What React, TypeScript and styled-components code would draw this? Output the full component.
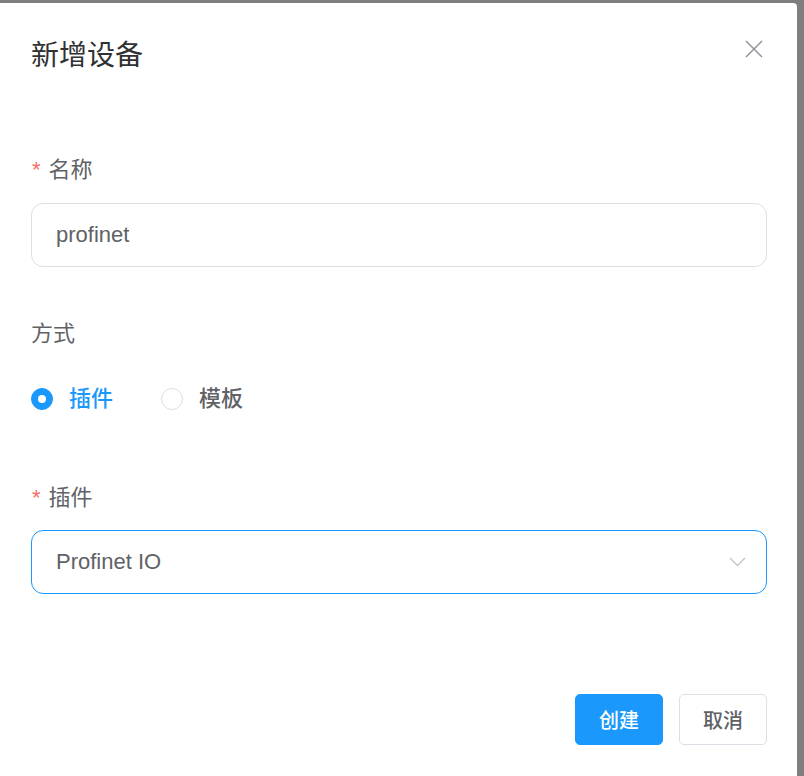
import { useState } from "react";
import styled, { createGlobalStyle, css } from "styled-components";

const primary = "#1a98fc";
const textRegular = "#606266";
const borderBase = "#dcdfe6";

const GlobalStyle = createGlobalStyle`
    html, body {
        margin: 0;
        padding: 0;
        background: #7f7f7f;
        font-family: "Liberation Sans", "Noto Sans CJK SC", sans-serif;
    }
    * {
        box-sizing: border-box;
    }
`;

const Page = styled.div`
    height: 776px;
    overflow: hidden;

    padding-top: 3px;
`;

const Dialog = styled.div`
    width: 797px;
    min-height: 800px;

    padding: 35px 30px 0 31px;

    background: white;
    border-radius: 0 4px 0 0;
`;

const Header = styled.div`
    display: flex;
    justify-content: space-between;
    align-items: center;

    margin-bottom: 81px;
`;

const Title = styled.h2`
    margin: 0;

    font-size: 28px;
    line-height: 36px;
    font-weight: 400;
    color: #303133;
`;

const CloseButton = styled.button`
    display: flex;

    width: 18px;
    height: 18px;
    margin: -14px 4px 0 0;
    padding: 0;

    border: none;
    background: none;
    cursor: pointer;
`;

const FormItem = styled.div`
    margin-bottom: 52px;
`;

const Label = styled.label<{ $required?: boolean }>`
    display: block;

    margin-bottom: 18px;

    font-size: 22px;
    line-height: 30px;
    color: ${textRegular};

    ${(props) =>
        props.$required &&
        css`
            &::before {
                content: "*";
                margin-right: 8px;
                margin-left: 1px;
                color: #f56c6c;
            }
        `}
`;

const Input = styled.input`
    display: block;

    width: 100%;
    height: 64px;
    padding: 0 24px;

    font-family: inherit;
    font-size: 22px;
    color: ${textRegular};

    border: 1px solid ${borderBase};
    border-radius: 12px;
    outline: none;
`;

const RadioGroup = styled.div`
    display: flex;
    align-items: center;

    height: 64px;
`;

const RadioItem = styled.label<{ $checked: boolean }>`
    display: flex;
    align-items: center;
    gap: 16px;

    margin-right: 48px;

    font-size: 22px;
    line-height: 30px;
    font-weight: 500;
    color: ${(props) => (props.$checked ? primary : textRegular)};
    cursor: pointer;
`;

const RadioDot = styled.span<{ $checked: boolean }>`
    position: relative;

    width: 22px;
    height: 22px;

    border-radius: 50%;
    border: 1px solid ${(props) => (props.$checked ? primary : borderBase)};
    background: ${(props) => (props.$checked ? primary : "white")};

    ${(props) =>
        props.$checked &&
        css`
            &::after {
                content: "";
                position: absolute;
                top: 50%;
                left: 50%;
                width: 8px;
                height: 8px;
                border-radius: 50%;
                background: white;
                transform: translate(-50%, -50%);
            }
        `}
`;

const Select = styled.div`
    display: flex;
    justify-content: space-between;
    align-items: center;

    height: 64px;
    margin-top: -1px;
    padding: 0 20px 0 24px;

    font-size: 22px;
    color: ${textRegular};

    border: 1px solid ${primary};
    border-radius: 12px;
`;

const Footer = styled.div`
    display: flex;
    justify-content: flex-end;
    gap: 16px;

    padding-top: 48px;
`;

const Button = styled.button<{ $primary?: boolean }>`
    height: 51px;
    padding: 0 23px;

    font-family: inherit;
    font-size: 20px;
    font-weight: 500;

    border-radius: 5px;
    cursor: pointer;

    ${(props) =>
        props.$primary
            ? css`
                  color: white;
                  background: ${primary};
                  border: 1px solid ${primary};
              `
            : css`
                  color: ${textRegular};
                  background: white;
                  border: 1px solid ${borderBase};
              `}
`;

const modes = ["插件", "模板"];

const App = () => {
    const [name, setName] = useState("profinet");
    const [mode, setMode] = useState("插件");

    return (
        <Page>
            <GlobalStyle />
            <Dialog>
                <Header>
                    <Title>新增设备</Title>
                    <CloseButton>
                        <svg width="18" height="18" viewBox="0 0 18 18">
                            <path
                                d="M1 1L17 17M17 1L1 17"
                                stroke="#909399"
                                strokeWidth="1.5"
                                fill="none"
                            />
                        </svg>
                    </CloseButton>
                </Header>

                <FormItem>
                    <Label $required>名称</Label>
                    <Input
                        value={name}
                        onChange={(e) => setName(e.target.value)}
                    />
                </FormItem>

                <FormItem>
                    <Label>方式</Label>
                    <RadioGroup>
                        {modes.map((m) => (
                            <RadioItem
                                key={m}
                                $checked={mode === m}
                                onClick={() => setMode(m)}
                            >
                                <RadioDot $checked={mode === m} />
                                {m}
                            </RadioItem>
                        ))}
                    </RadioGroup>
                </FormItem>

                <FormItem>
                    <Label $required>插件</Label>
                    <Select>
                        <span>Profinet IO</span>
                        <svg width="17" height="10" viewBox="0 0 17 10">
                            <path
                                d="M1 1L8.5 8.5L16 1"
                                stroke="#c0c4cc"
                                strokeWidth="1.3"
                                fill="none"
                            />
                        </svg>
                    </Select>
                </FormItem>

                <Footer>
                    <Button $primary>创建</Button>
                    <Button>取消</Button>
                </Footer>
            </Dialog>
        </Page>
    );
};

export default App;
